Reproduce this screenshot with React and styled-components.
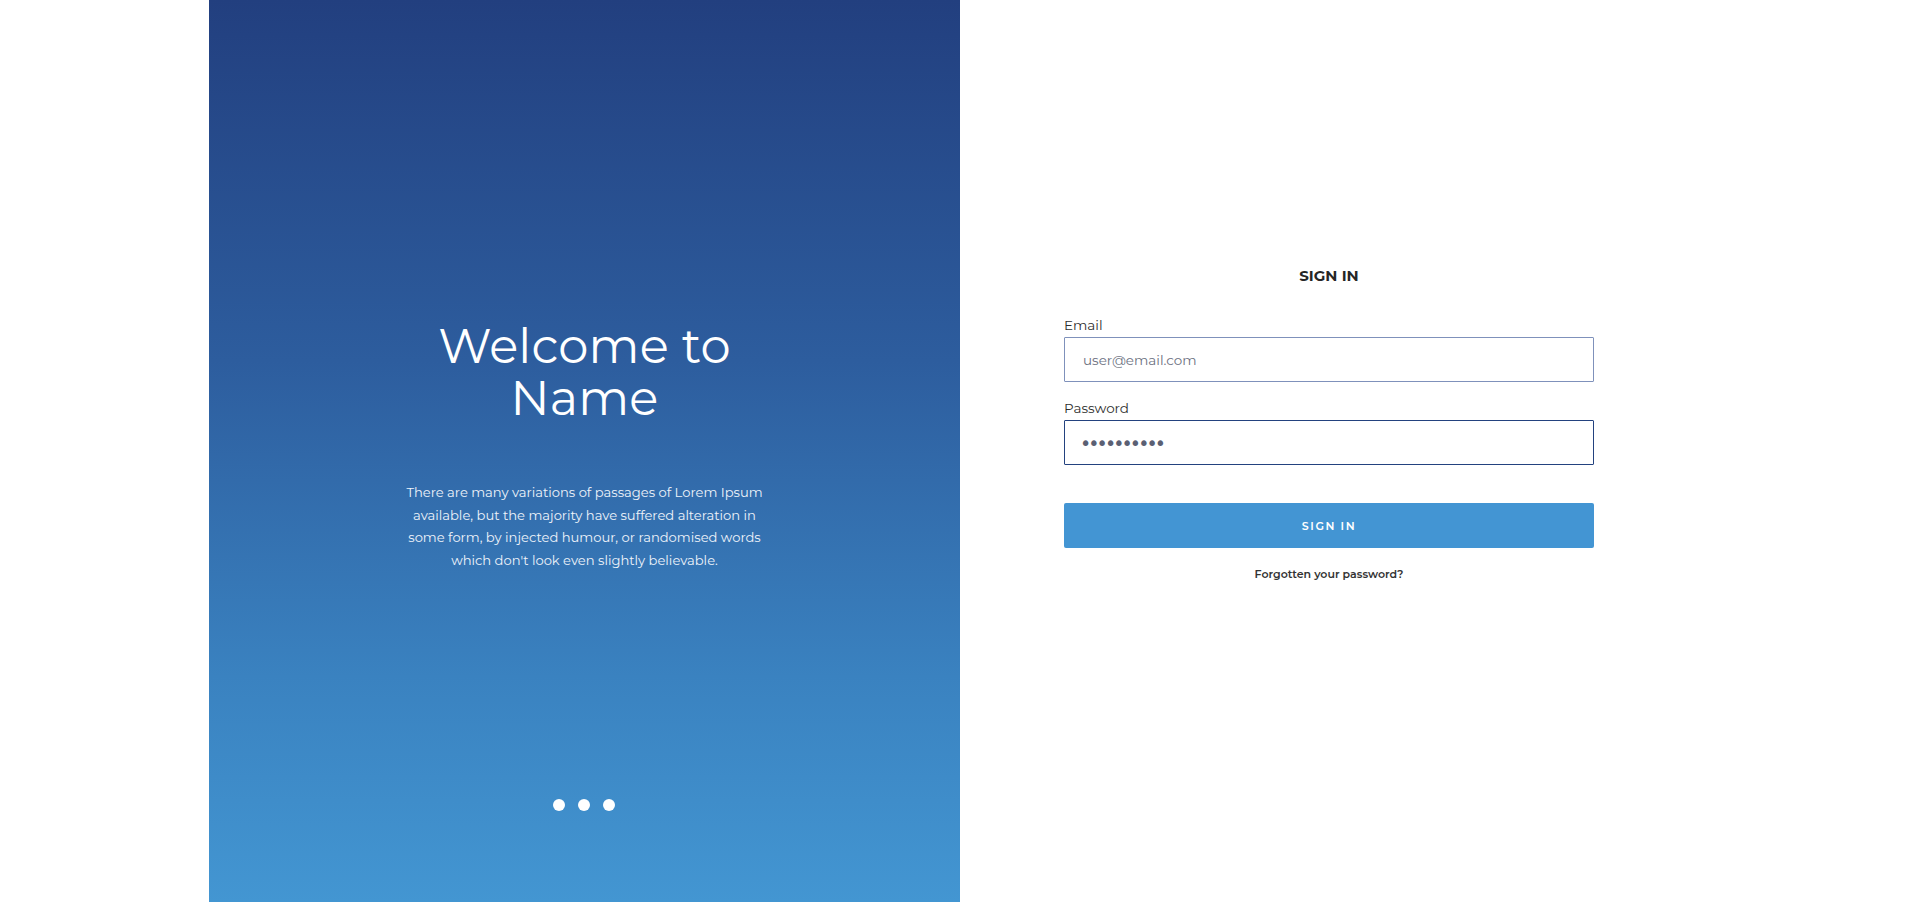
import React from 'react';
import styled, { createGlobalStyle } from 'styled-components';

const GlobalStyle = createGlobalStyle`
  html, body {
    margin: 0;
    padding: 0;
    background: #ffffff;
  }
  body {
    font-family: "Montserrat", "DejaVu Sans", "Noto Sans", sans-serif;
  }
  * { box-sizing: border-box; }
`;

const Page = styled.div`
  display: flex;
  justify-content: center;
  height: 902px;
  background: #ffffff;
`;

const Container = styled.div`
  display: grid;
  grid-template-columns: 751px 751px;
  width: 1502px;
  height: 100%;
`;

const Hero = styled.section`
  display: flex;
  flex-direction: column;
  align-items: center;
  padding: 320px 0 91px;
  background: linear-gradient(180deg, #223f7f 0%, #2d5d9e 40%, #3a82c0 75%, #4396d2 100%);
  color: #ffffff;
  text-align: center;
`;

const Title = styled.h1`
  margin: 0;
  font-size: 48px;
  font-weight: 400;
  line-height: 52px;
  letter-spacing: 0.2px;
`;

const Lead = styled.p`
  margin: 57px 0 0;
  width: 364px;
  font-size: 13.1px;
  line-height: 22.7px;
  color: #eef3fa;
`;

const Dots = styled.div`
  display: flex;
  gap: 13px;
  margin-top: auto;
  margin-right: 1px;
`;

const Dot = styled.span`
  width: 12px;
  height: 12px;
  border-radius: 50%;
  background: #ffffff;
`;

const FormSide = styled.section`
  display: flex;
  justify-content: center;
  padding: 266px 13px 0 0;
`;

const Form = styled.form`
  display: flex;
  flex-direction: column;
  width: 530px;
`;

const Heading = styled.h2`
  margin: 0 0 30px;
  font-size: 15px;
  font-weight: 700;
  line-height: 20px;
  text-align: center;
  color: #262626;
`;

const Label = styled.label`
  display: block;
  font-size: 13.5px;
  line-height: 18px;
  color: #2e2e2e;
  margin: ${({ $first }) => ($first ? '0' : '17px')} 0 3px;
`;

const Input = styled.input`
  display: block;
  width: 100%;
  height: 45px;
  padding: 0 18px;
  border: 1px solid ${({ $active }) => ($active ? '#23427f' : '#7f91bb')};
  border-radius: 1px;
  font-family: inherit;
  font-size: 13.5px;
  color: #5a5f72;
  background: #ffffff;
  outline: none;

  &::placeholder {
    color: #6b7080;
  }

  &[type='password'] {
    font-family: "DejaVu Sans", sans-serif;
    font-size: 19px;
    letter-spacing: -2.9px;
    color: #5b6073;
    padding-left: 15px;
  }
`;

const SubmitButton = styled.button`
  margin-top: 38px;
  height: 45px;
  width: 100%;
  border: none;
  border-radius: 2px;
  background: #4395d3;
  color: #ffffff;
  font-family: inherit;
  font-size: 11px;
  font-weight: 600;
  letter-spacing: 1.6px;
  cursor: pointer;
`;

const Forgot = styled.a`
  margin-top: 18px;
  font-size: 11px;
  font-weight: 600;
  line-height: 16px;
  text-align: center;
  color: #333333;
  text-decoration: none;
`;

export default function App() {
  return (
    <>
      <GlobalStyle />
      <Page>
        <Container>
          <Hero>
            <Title>
              Welcome to
              <br />
              Name
            </Title>
            <Lead>
              There are many variations of passages of Lorem Ipsum available, but the majority
              have suffered alteration in some form, by injected humour, or randomised words
              which don't look even slightly believable.
            </Lead>
            <Dots>
              <Dot />
              <Dot />
              <Dot />
            </Dots>
          </Hero>

          <FormSide>
            <Form onSubmit={(e) => e.preventDefault()}>
              <Heading>SIGN IN</Heading>
              <Label $first htmlFor="email">Email</Label>
              <Input id="email" type="email" placeholder="user@email.com" />
              <Label htmlFor="password">Password</Label>
              <Input id="password" type="password" defaultValue="password12" $active />
              <SubmitButton type="submit">SIGN IN</SubmitButton>
              <Forgot href="#">Forgotten your password?</Forgot>
            </Form>
          </FormSide>
        </Container>
      </Page>
    </>
  );
}
